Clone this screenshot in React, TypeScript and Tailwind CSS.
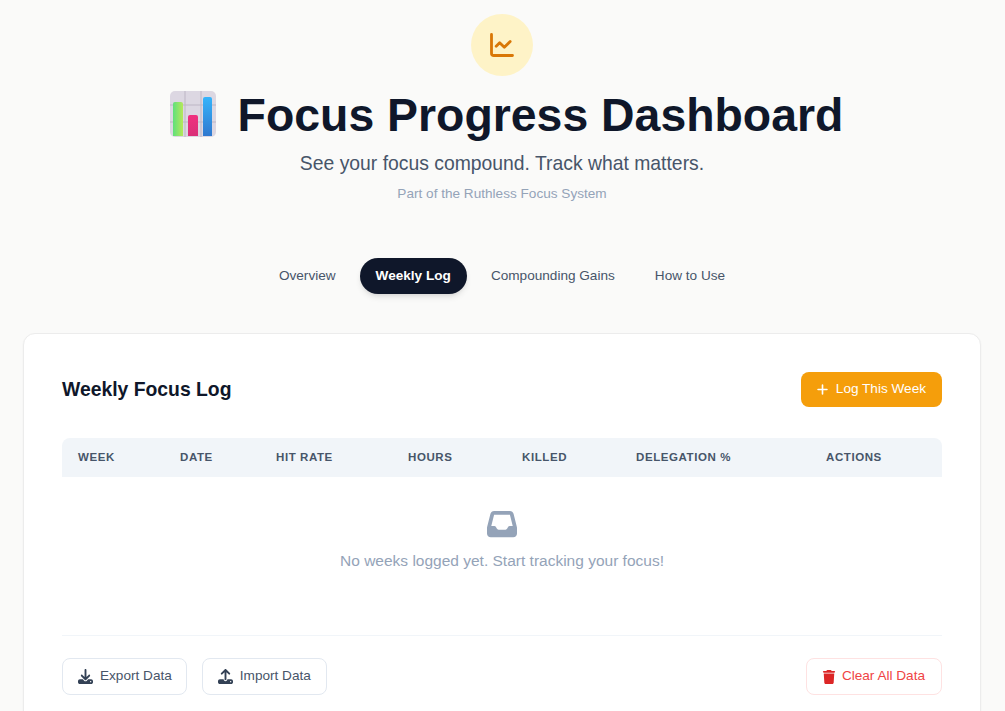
import React from 'react';
import { ChartLine } from 'lucide-react';
import { FaDownload, FaUpload, FaTrash, FaInbox, FaPlus } from 'react-icons/fa6';

const tabs = ['Overview', 'Weekly Log', 'Compounding Gains', 'How to Use'];
const columns = ['Week', 'Date', 'Hit Rate', 'Hours', 'Killed', 'Delegation %', 'Actions'];

const BarChartEmoji: React.FC = () => (
    <svg width="46" height="46" viewBox="0 0 46 46" className="mb-[2px] ml-px shrink-0">
        <defs>
            <linearGradient id="green" x1="0" y1="0" x2="1" y2="0">
                <stop offset="0" stopColor="#5fe07c" />
                <stop offset="1" stopColor="#b6e85a" />
            </linearGradient>
            <linearGradient id="pink" x1="0" y1="0" x2="0" y2="1">
                <stop offset="0" stopColor="#f0307f" />
                <stop offset="1" stopColor="#d92f78" />
            </linearGradient>
            <linearGradient id="blue" x1="0" y1="0" x2="0" y2="1">
                <stop offset="0" stopColor="#35b4fb" />
                <stop offset="1" stopColor="#2f78cf" />
            </linearGradient>
        </defs>
        <rect width="46" height="46" rx="5" fill="#dcd7e2" />
        <path d="M15 0v46M31 0v46M0 14h46M0 31h46" stroke="#bdb6c5" strokeWidth="1" />
        <path d="M3 13a2 2 0 0 1 2-2h6a2 2 0 0 1 2 2v32H3z" fill="url(#green)" />
        <path d="M18 26a2 2 0 0 1 2-2h6a2 2 0 0 1 2 2v19H18z" fill="url(#pink)" />
        <path d="M33 8a2 2 0 0 1 2-2h5a2 2 0 0 1 2 2v37h-9z" fill="url(#blue)" />
    </svg>
);

const App: React.FC = () => {
    return (
        <div className="min-h-screen bg-[#fafaf9] pt-[14px] pr-6 pl-[23px] font-['Liberation_Sans',Arial,sans-serif]">
            <header className="flex flex-col items-center">
                <div className="flex h-[62px] w-[62px] items-center justify-center rounded-full bg-[#fef3c7] text-[#d97706]">
                    <ChartLine size={28} strokeWidth={2.4} />
                </div>
                <h1 className="mt-[10px] flex items-center gap-[22px] pl-2 text-[46.4px] leading-[58px] font-bold text-[#0f172a]">
                    <BarChartEmoji />
                    Focus Progress Dashboard
                </h1>
                <p className="mt-[5px] text-[19.35px] leading-[28px] text-[#475569]">See your focus compound. Track what matters.</p>
                <p className="mt-[7px] text-[13.6px] leading-[20px] text-[#94a3b8]">Part of the Ruthless Focus System</p>
            </header>

            <nav className="mt-[54px] flex justify-center gap-2">
                {tabs.map((tab) => (
                    <div
                        key={tab}
                        className={
                            tab === 'Weekly Log'
                                ? 'flex h-9 items-center rounded-full bg-[#0f172a] px-4 text-[13.6px] font-bold text-white shadow-md'
                                : 'flex h-9 items-center rounded-full px-4 text-[13.6px] text-[#475569]'
                        }
                    >
                        {tab}
                    </div>
                ))}
            </nav>

            <main className="mt-[39px] rounded-xl border border-[#ececec] bg-white px-[38px] pt-[38px] pb-[38px] shadow-xs">
                <div className="flex items-center justify-between">
                    <h2 className="text-[19.35px] font-bold text-[#0f172a]">Weekly Focus Log</h2>
                    <button className="flex h-[35px] items-center gap-[7px] rounded-lg bg-[#f59e0b] pr-4 pl-[15px] text-[13.6px] text-white">
                        <FaPlus size={13} />
                        Log This Week
                    </button>
                </div>

                <div className="mt-[31px] grid h-[39px] grid-cols-[102px_96px_132px_114px_114px_190px_1fr] items-center rounded-t-lg bg-[#f1f5f9] pl-4 text-[11.52px] font-bold tracking-[0.576px] text-[#475569] uppercase">
                    {columns.map((col) => (
                        <div key={col}>{col}</div>
                    ))}
                </div>

                <div className="flex h-[159px] flex-col items-center border-b border-[#f1f5f9] pt-[32px]">
                    <FaInbox size={30} className="text-[#94a3b8]" />
                    <p className="mt-[10px] text-[15.5px] leading-[24px] text-[#94a3b8]">No weeks logged yet. Start tracking your focus!</p>
                </div>

                <div className="mt-[22px] flex items-center justify-between">
                    <div className="flex gap-[15px]">
                        <button className="flex h-[37px] items-center gap-[7px] rounded-lg border border-[#e2e8f0] bg-white pr-[14px] pl-[15px] text-[13.6px] text-[#475569]">
                            <FaDownload size={15} className="text-[#334155]" />
                            Export Data
                        </button>
                        <button className="flex h-[37px] items-center gap-[7px] rounded-lg border border-[#e2e8f0] bg-white pr-[15px] pl-[15px] text-[13.6px] text-[#475569]">
                            <FaUpload size={15} className="text-[#334155]" />
                            Import Data
                        </button>
                    </div>
                    <button className="flex h-[37px] items-center gap-[6px] rounded-lg border border-[#fee2e2] bg-white pr-4 pl-[15px] text-[13.6px] text-[#ef4444]">
                        <FaTrash size={14} className="text-[#dc2626]" />
                        Clear All Data
                    </button>
                </div>
            </main>
        </div>
    );
};

export default App;
